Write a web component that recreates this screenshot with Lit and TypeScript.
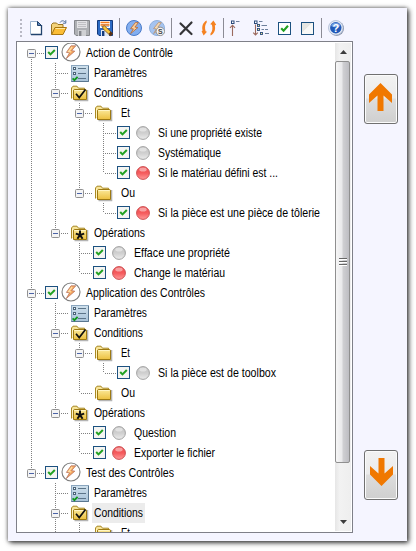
import { LitElement, html, css, svg, nothing } from "lit";
import { customElement, property } from "lit/decorators.js";
import { classMap } from "lit/directives/class-map.js";

type Kind = "bolt" | "params" | "conditions" | "operations" | "folder" | "grey" | "red";

interface TreeItem {
  label: string;
  kind: Kind;
  width: number;
  selected?: boolean;
  children?: TreeItem[];
}

interface Row {
  item: TreeItem;
  guides: string[];
}

const node = (kind: Kind, label: string, width: number, children?: TreeItem[], selected = false): TreeItem => ({
  kind, label, width, children, selected,
});

const TREE: TreeItem[] = [
  node("bolt", "Action de Contrôle", 87, [
    node("params", "Paramètres", 53),
    node("conditions", "Conditions", 49, [
      node("folder", "Et", 9, [
        node("grey", "Si une propriété existe", 104),
        node("grey", "Systématique", 63),
        node("red", "Si le matériau défini est ...", 120),
      ]),
      node("folder", "Ou", 14, [node("red", "Si la pièce est une pièce de tôlerie", 162)]),
    ]),
    node("operations", "Opérations", 51, [
      node("grey", "Efface une propriété", 96),
      node("red", "Change le matériau", 91),
    ]),
  ]),
  node("bolt", "Application des Contrôles", 119, [
    node("params", "Paramètres", 53),
    node("conditions", "Conditions", 49, [
      node("folder", "Et", 9, [node("grey", "Si la pièce est de toolbox", 118)]),
      node("folder", "Ou", 14),
    ]),
    node("operations", "Opérations", 51, [
      node("grey", "Question", 42),
      node("red", "Exporter le fichier", 81),
    ]),
  ]),
  node("bolt", "Test des Contrôles", 88, [
    node("params", "Paramètres", 53),
    node("conditions", "Conditions", 49, [
      node("folder", "Et", 9),
      node("folder", "Ou", 14),
    ], true),
    node("operations", "Opérations", 51),
  ]),
];

const VISIBLE_ROWS = 25;

function flatten(items: TreeItem[], parents: string[] = []): Row[] {
  const rows: Row[] = [];
  items.forEach((item, i) => {
    const last = i === items.length - 1;
    const first = i === 0 && parents.length === 0;
    rows.push({ item, guides: [...parents, first ? "first" : last ? "last" : "tee"] });
    if (item.children) rows.push(...flatten(item.children, [...parents, last ? "none" : "pass"]));
  });
  return rows;
}

const FLOPPY = (edge: string, body: string, paper: string, metal: string) => svg`
  <path d="M.5.5H15.5V15.5H2L.5 14Z" fill=${body} stroke=${edge}/>
  <rect x="3" y="1" width="10" height="7" fill=${paper}/>
  <path d="M4 2.5H12M4 4.5H12M4 6.5H12" stroke=${edge} stroke-width=".8" opacity=".45"/>
  <rect x="4" y="10" width="8" height="6" fill=${metal}/>
  <rect x="5" y="11" width="2.4" height="5" fill=${edge}/>`;

const TOOL: Record<string, unknown> = {
  new: svg`<path d="M2.5 1.5H9.5L13.5 5.5V14.5H2.5Z" fill="#fff" stroke="#9db4cf"/>
    <path d="M13.5 5V14.5H3" fill="none" stroke="#21436d" stroke-width="1.3"/>
    <path d="M9.5 1.5V5.5H13.5Z" fill="#5f86b8" stroke="#21436d"/>`,
  open: svg`<path d="M.5 14.5V4.5L2 3H5.5L7 4.5H12V7" fill="#f3d27a" stroke="#9a7420"/>
    <path d="M.7 14.5 4 7.5H15.5L12 14.5Z" fill="#fbbd35" stroke="#a8750e"/>
    <path d="M4.5 8.5H14" stroke="#ffe7a0"/>
    <path d="M9 2.5C10.5.2 13 .3 14.3 2.4M14.8.2V3.2H11.9" fill="none" stroke="#4d6e9a"/>`,
  save: FLOPPY("#85878c", "#aeb0b4", "#e2e2e5", "#d0d1d4"),
  edit: svg`${FLOPPY("#143a7c", "#2c6ac4", "#fff", "#dfe8f4")}
    <path d="M3.5 2.5H12.5M3.5 5H12.5" stroke="#f27a1a" stroke-width="1.4"/>
    <path d="M5.5 6.5 7.5 5.8 15.5 13.5 13.5 15.8 6 8.8Z" fill="#f6c43c" stroke="#7a4c16" stroke-width=".8"/>
    <path d="M13.5 11.6 15.8 13.6 13.6 15.9 11.6 14Z" fill="#553018"/>`,
  bolt: svg`<circle cx="8" cy="8" r="7.5" fill="#82aef0" stroke="#4a7ac8"/>
    <path d="M9.4 2.6 4.6 8.6 7.4 8.9 4.6 13.6 11.8 7.6 8.9 7.1 12.4 2.6Z" fill="#fbd09a" stroke="#b5652f" stroke-width=".8" stroke-linejoin="round"/>`,
  boltS: svg`<circle cx="8" cy="8" r="7.5" fill="#a5c3f0" stroke="#8fb0dc"/>
    <path d="M9.4 2.6 4.6 8.6 7.4 8.9 4.6 13.6 11.8 7.6 8.9 7.1 12.4 2.6Z" fill="#f4d8b4" stroke="#b39173" stroke-width=".8"/>
    <circle cx="11.3" cy="11.4" r="4.2" fill="#f4f4f4" stroke="#888" stroke-width=".9"/>
    <text x="11.3" y="14" class="tiny" text-anchor="middle">S</text>`,
  cross: svg`<path d="M2.5 3.5 13.5 14M13.5 2.5 2.5 14" stroke="#343437" stroke-width="2.2" stroke-linecap="round"/>`,
  swap: svg`<path d="M5.6.5C1.8 2.6.6 6.6 1.6 10.6L.6 11.2 2.6 15.4 6 11.8 4.6 11.2C3.6 7.6 3.9 4.6 5.8 2.2Z" fill="#f58220"/>
    <path d="M9.6 15.5C13.4 13.4 14.8 9.4 13.8 5.4L15.2 4.8 12.4.6 9.2 4.2 10.9 4.8C11.9 8.4 11.5 11.4 9.4 13.8Z" fill="#f58220"/>`,
  collapse: svg`<rect x="1.5" y="1" width="2.5" height="2.5" fill="#fff" stroke="#2a4a7a"/>
    <path d="M6 1.5H9.5" stroke="#6d7f9c"/><path d="M2.5 16V6M0 7.8 2.5 5.2 5 7.8" fill="none" stroke="#9b6a5e" stroke-width="1.1"/>`,
  expand: svg`<rect x="1.5" y="1" width="2.5" height="2.5" fill="#fff" stroke="#2a4a7a"/>
    <path d="M6 1.5H9.5M8.5 5.5H14M12 9.5H15M12 13.5H16M8.5 9.5H11" stroke="#6d7f9c"/>
    <path d="M2.5 4.5V15M.2 12.6 2.5 15 4.8 12.6" fill="none" stroke="#9b6a5e" stroke-width="1.1"/>
    <rect x="4.5" y="4.5" width="2" height="2" fill="#f6e58a" stroke="#2a4a7a" stroke-width=".9"/>
    <rect x="4.5" y="8.5" width="2" height="2" fill="#f6e58a" stroke="#2a4a7a" stroke-width=".9"/>
    <rect x="7.5" y="12.5" width="2" height="2" fill="#f6e58a" stroke="#2a4a7a" stroke-width=".9"/>`,
  check: svg`<rect x="2.5" y="2.5" width="12" height="12" fill="#fff" stroke="#1c5180"/>
    <path d="M5.2 8.2 7.6 10.8 12 5.8" fill="none" stroke="#21a121" stroke-width="2.1"/>`,
  uncheck: svg`<rect x="2.5" y="2.5" width="12" height="12" fill="#fff" stroke="#1c5180"/>
    <path d="M3 3H13L3 13Z" fill="#e6e6e2"/><path d="M13 3 3 13V14H14V3Z" fill="#f8f8f6"/>`,
  help: svg`<circle cx="8.6" cy="8.6" r="7.4" fill="#8791a6"/><circle cx="7.8" cy="7.8" r="7.3" fill="#e4ebf6" stroke="#a9b8d2" stroke-width=".8"/>
    <circle cx="7.8" cy="7.8" r="5.7" fill="#2159b8"/><path d="M3 6A5.2 5.2 0 0 1 12.6 6Q7.8 8.6 3 6Z" fill="#6f9ce0"/>
    <text x="7.8" y="11.8" class="mark" text-anchor="middle">?</text>`,
};

const GROUPS = [["new", "open", "save", "edit"], ["bolt", "boltS"], ["cross", "swap"], ["collapse", "expand", "check", "uncheck"], ["help"]];

const folder = (mark: unknown) => svg`
  <path d="M3.5 15.5H16.5V5" fill="none" stroke="#b4b4b4" stroke-width="1.6"/>
  <path d="M.5 13.5V3L2 1.2H6L7.5 3.2H13.5V5" fill="#f8e59a" stroke="#a98823"/>
  <path d="M2.5 14.5V5.2L3.3 4.5H14.7L15.5 5.2V14.5Z" fill="url(#gold)" stroke="#9e7a12"/>
  <path d="M3.5 5.5H14.5M1.5 4V12" stroke="#fff5c4" fill="none"/>${mark}`;

const ball = (id: string, edge: string) => svg`<circle cx="7" cy="7" r="6.4" fill="url(#${id})" stroke=${edge}/>
  <ellipse cx="7" cy="3.6" rx="3.7" ry="2" fill="#fff" opacity=".45"/>`;

const stops = (id: string, colours: string[]) => svg`<linearGradient id=${id} x1="0" y1="0" x2="0" y2="1">
  ${colours.map((c, i) => svg`<stop offset=${i / (colours.length - 1)} stop-color=${c}/>`)}</linearGradient>`;

const GOLD = ["#fbe99a", "#ecc03f"];

const ICON: Record<Kind, { w: number; h: number; art: unknown }> = {
  bolt: { w: 20, h: 20, art: svg`<circle cx="10" cy="10" r="9" fill="#fff" stroke="#7d7d7d" stroke-width="1.1"/>
    <path d="M10 3.8 5.4 10.4 8.6 10.8 5.2 16.6 13.8 9.2 10.6 8.6 14.8 3.8Z" fill="#f7a860" stroke="#b06a58" stroke-width=".7"/>
    <path d="M11.2 4.8 7.6 9.6 10.2 9.8" fill="none" stroke="#ffe2a8" stroke-width="1.2"/>` },
  params: { w: 18, h: 17, art: svg`${stops("blue", ["#cfe0ec", "#a9c3d9"])}<rect x=".5" y=".5" width="17" height="16" fill="url(#blue)" stroke="#8ba6bf"/>
    <path d="M.5 16.5H17.5V1" fill="none" stroke="#5a7790"/>
    <path d="M7 3.5H15M7 8.5H15M7 13.5H15" stroke="#5c7488"/>
    <rect x="2.5" y="2.5" width="2" height="2" fill="#fff" stroke="#4c6478"/>
    <rect x="2.5" y="7.5" width="2" height="2" fill="#fff" stroke="#4c6478"/>
    <path d="M1.6 13.4 3.4 15.2 6.6 11.8" fill="none" stroke="#0f9a1c" stroke-width="1.8"/>` },
  conditions: { w: 18, h: 16, art: svg`${stops("gold", GOLD)}${folder(svg`<path d="M5 8.8 8.2 12.6 14.5 4.5" fill="none" stroke="#111" stroke-width="1.7"/>`)}` },
  operations: { w: 18, h: 16, art: svg`${stops("gold", GOLD)}${folder(svg`<path d="M9 5.4V10M4.8 8.6 9 10 13.2 8.6M6.4 13.8 9 10 11.6 13.8" fill="none" stroke="#111" stroke-width="2"/>`)}` },
  folder: { w: 18, h: 16, art: svg`${stops("gold", GOLD)}${folder(nothing)}` },
  grey: { w: 14, h: 14, art: svg`${stops("g", ["#c2c2c2", "#cfcfcf", "#ececec"])}${ball("g", "#a3a3a3")}` },
  red: { w: 14, h: 14, art: svg`${stops("r", ["#ee5052", "#f55a5c", "#ff9a9a"])}${ball("r", "#cf5052")}` },
};

@customElement("tree-row")
class TreeRow extends LitElement {
  @property({ attribute: false }) row!: Row;

  static styles = css`
    :host { display: flex; align-items: center; height: 20px; flex: none; }
    .guide { width: 24px; height: 20px; flex: none; display: grid; grid-template: 10px 10px / 13px 11px; }
    .up, .down { width: 1px; justify-self: end; 
      background: repeating-linear-gradient(#808080 0 1px, transparent 1px 2px); }
    .up { grid-area: 1 / 1; }
    .down { grid-area: 2 / 1; }
    .across { grid-area: 2 / 2; height: 1px; margin-right: -1px;
      background: repeating-linear-gradient(90deg, transparent 0 1px, #808080 1px 2px); }
    .box { grid-area: 1 / 1 / 3 / 3; width: 9px; height: 9px; margin: 6px 0 0 8px; z-index: 1; }
    svg { display: block; flex: none; overflow: visible; }
    .check { margin: 0 6px 1px 2px; }
    .check.tight { margin-right: 3px; }
    .label { color: #000; white-space: pre; padding-left: 2px; height: 20px; }
    .label text { font: 12px "Liberation Sans", Arial, sans-serif; }
    .bolt { margin: -2px 3px 0 0; }
    .params { margin: 1px 3px 0 4px; }
    .tab { margin: 0 3px 0 4px; }
    .folder { margin: 0 6px 0 4px; }
    .dot { margin-right: 6px; }
    .selected { background: #ececec; }
  `;

  render() {
    const { item, guides } = this.row;
    const icon = ICON[item.kind];
    const checkable = ["bolt", "grey", "red"].includes(item.kind);
    return html`
      ${guides.map((g, i) => {
        const own = i === guides.length - 1;
        return html`<div class="guide">
          ${g !== "first" && g !== "none" ? html`<i class="up"></i>` : nothing}
          ${g !== "last" && g !== "none" ? html`<i class="down"></i>` : nothing}
          ${own ? html`<i class="across"></i>` : nothing}
          ${own && item.children ? html`<svg class="box" viewBox="0 0 9 9"><rect x=".5" y=".5" width="8" height="8" rx="1" fill="#f4f4f4" stroke="#919191"/><path d="M2 4.5H7" stroke="#4b63a7"/></svg>` : nothing}
        </div>`;
      })}
      ${checkable ? html`<svg class=${classMap({ check: true, tight: item.kind === "bolt" })} width="13" height="13">
        <rect x=".5" y=".5" width="12" height="12" fill="#f4f4f2" stroke="#1c5180"/>
        <path d="M3.2 6 5.5 8.4 9.8 4" fill="none" stroke="#21a121" stroke-width="2"/></svg>` : nothing}
      <svg class=${classMap({
        bolt: item.kind === "bolt", params: item.kind === "params", folder: item.kind === "folder",
        tab: item.kind === "conditions" || item.kind === "operations",
        dot: item.kind === "grey" || item.kind === "red",
      })} width=${icon.w} height=${icon.h}>${icon.art}</svg>
      <span class=${classMap({ label: true, selected: !!item.selected })}><svg width=${item.width + 2} height="20">
        <text x="0" y="14" textLength=${item.width} lengthAdjust="spacingAndGlyphs">${item.label}</text></svg></span>`;
  }
}

@customElement("app-root")
class AppRoot extends LitElement {
  static styles = css`
    :host { display: block; box-sizing: border-box; width: 416px; height: 551px; padding: 8px 9px 10px 8px; background: #fff; overflow: hidden; }
    .window { box-sizing: border-box; height: 533px; background: #f5f5ff; padding: 0 9px 8px 8px; display: flex; flex-direction: column;
      box-shadow: 0 0 4px rgba(0,0,0,.6), 2px 2px 5px rgba(0,0,0,.65); }
    .toolbar { height: 33px; flex: none; display: flex; align-items: center; gap: 7px; padding: 7px 0 0 4px; box-sizing: border-box; }
    .toolbar svg { width: 16px; height: 16px; overflow: visible; flex: none; }
    .grip { width: 2px; height: 18px; margin-right: -1px; background: repeating-linear-gradient(#b9b9c4 0 2px, transparent 2px 4px); }
    .sep { width: 1px; height: 20px; margin: 0 -1px; background: #8b8b95; }
    .tiny { font: bold 7px "Liberation Sans", sans-serif; fill: #444; }
    .mark { font: bold 11px "Liberation Sans", sans-serif; fill: #fff; }
    .body { display: flex; flex: 1; min-height: 0; justify-content: space-between; }
    .panel { box-sizing: border-box; width: 337px; border: 1px solid #7f8088; background: #fff; display: flex; padding: 1px; }
    .tree { flex: 1; min-width: 0; padding-left: 1px; overflow: hidden; height: 489px; }
    .bar { width: 16px; display: flex; flex-direction: column; background: linear-gradient(90deg, #e6e6e6, #f2f2f2 30%, #eee); }
    .cap { height: 18px; display: grid; place-items: center; flex: none; }
    .thumb { box-sizing: border-box; height: 402px; margin-right: 1px; border: 1px solid #8f8f8f; border-radius: 2px;
      background: linear-gradient(90deg, #f6f6f6, #e9e9eb 45%, #cfcfd2 55%, #bdbdc2); display: grid; place-items: center; }
    .space { flex: 1; }
    .moves { display: flex; flex-direction: column; justify-content: space-between; padding: 33px 0; box-sizing: border-box; }
    .move { box-sizing: border-box; width: 34px; height: 50px; border: 1px solid #707070; border-radius: 3px; padding: 0 1px 5px 0;
      background: linear-gradient(#f2f2f2, #ebebeb 48%, #dddddd 50%, #cfcfcf); box-shadow: inset 0 0 0 1px #fbfbfb; display: grid; place-items: center; }
    .move svg { display: block; }
    .move.down { padding: 0 0 6px 1px; }
    .flip { transform: rotate(180deg); }
  `;

  render() {
    const arrow = svg`<path d="M11.5 0 23 11.5V20L14.5 12.5V28H8.5V12.5L0 20V11.5Z" fill="#f07800"/>`;
    return html`<div class="window">
      <div class="toolbar">
        <i class="grip"></i>
        ${GROUPS.map((g, i) => html`${i ? html`<i class="sep"></i>` : nothing}${g.map((n) => html`<svg viewBox="0 0 16 16">${TOOL[n]}</svg>`)}`)}
      </div>
      <div class="body">
        <div class="panel">
          <div class="tree">${flatten(TREE).slice(0, VISIBLE_ROWS).map((row) => html`<tree-row .row=${row}></tree-row>`)}</div>
          <div class="bar">
            <div class="cap"><svg width="7" height="4"><path d="M0 4 3.5 0 7 4Z" fill="#3c3c3c"/></svg></div>
            <div class="thumb"><svg width="8" height="8"><path d="M0 .5H8M0 3.5H8M0 6.5H8" stroke="#666"/><path d="M0 1.5H8M0 4.5H8M0 7.5H8" stroke="#fff"/></svg></div>
            <div class="space"></div>
            <div class="cap"><svg width="7" height="4"><path d="M0 0 3.5 4 7 0Z" fill="#3c3c3c"/></svg></div>
          </div>
        </div>
        <div class="moves">
          <button class="move"><svg width="23" height="28">${arrow}</svg></button>
          <button class="move down"><svg class="flip" width="23" height="28">${arrow}</svg></button>
        </div>
      </div>
    </div>`;
  }
}
